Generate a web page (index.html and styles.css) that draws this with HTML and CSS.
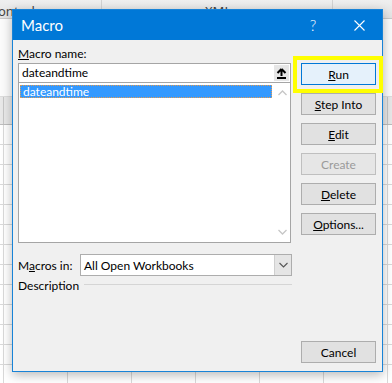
FILE: index.html
```html
<!DOCTYPE html>
<html>
<head>
    <meta charset="UTF-8">
    <title>Macro</title>
    <link rel="stylesheet" href="styles.css">
</head>
<body>
    <div class="ribbon">
        <span class="grp grp-ctl">ontrols</span>
        <span class="grp grp-xml">XML</span>
        <span class="grp grp-rest"></span>
    </div>
    <div class="formula"></div>
    <div class="colhead"></div>
    <div class="grid"></div>

    <div class="dialog">
        <div class="titlebar">
            <span class="title">Macro</span>
            <span class="tb-btn help">?</span>
            <span class="tb-btn close">
                <svg width="11" height="11" viewBox="0 0 11 11"><path d="M0.5 0.5 L10.5 10.5 M10.5 0.5 L0.5 10.5" stroke="#fff" stroke-width="1.1" fill="none"/></svg>
            </span>
        </div>

        <div class="content">
            <div class="main">
                <div class="lbl"><u>M</u>acro name:</div>
                <div class="namebox">
                    <span class="name-text">dateandtime</span>
                    <span class="up-btn">
                        <svg width="11" height="11" viewBox="0 0 11 11"><path d="M5.5 1 L1.5 5 M5.5 1 L9.5 5 M5.5 1 L5.5 8" stroke="#000" stroke-width="2" fill="none"/><rect x="1" y="9" width="9" height="2" fill="#000"/></svg>
                    </span>
                </div>
                <div class="listbox">
                    <div class="items">
                        <div class="item selected">dateandtime</div>
                    </div>
                    <div class="scroll">
                        <svg width="9" height="6" viewBox="0 0 9 6"><path d="M0.5 5 L4.5 1 L8.5 5" stroke="#c6c6c6" stroke-width="1.3" fill="none"/></svg>
                        <svg width="9" height="6" viewBox="0 0 9 6"><path d="M0.5 1 L4.5 5 L8.5 1" stroke="#c6c6c6" stroke-width="1.3" fill="none"/></svg>
                    </div>
                </div>
                <div class="row-in">
                    <span class="lbl-in">M<u>a</u>cros in:</span>
                    <div class="select">
                        <span class="select-text">All Open Workbooks</span>
                        <span class="select-arrow">
                            <svg width="9" height="6" viewBox="0 0 9 6"><path d="M0.5 1 L4.5 5 L8.5 1" stroke="#555" stroke-width="1.1" fill="none"/></svg>
                        </span>
                    </div>
                </div>
                <div class="desc">
                    <span>Description</span>
                    <span class="rule"></span>
                </div>
            </div>

            <div class="actions">
                <button class="btn btn-default"><u>R</u>un</button>
                <button class="btn"><u>S</u>tep Into</button>
                <button class="btn"><u>E</u>dit</button>
                <button class="btn btn-disabled">C<u>r</u>eate</button>
                <button class="btn"><u>D</u>elete</button>
                <button class="btn"><u>O</u>ptions...</button>
                <button class="btn btn-cancel">Cancel</button>
            </div>
        </div>
    </div>
</body>
</html>
```

FILE: styles.css
```css
body {
    margin: 0;
    width: 392px;
    height: 383px;
    overflow: hidden;
    position: relative;
    background: #ffffff;
    font-family: Lato, "Noto Sans", Arial, sans-serif;
    font-size: 12px;
    color: #000;
}

/* spreadsheet behind the dialog */
.ribbon {
    display: flex;
    height: 19px;
    background: linear-gradient(#efefef, #e3e3e3);
    border-bottom: 1px solid #c9c9c9;
    color: #444;
    font-family: "Noto Sans", Arial, sans-serif;
    font-size: 13px;
    line-height: 16px;
    box-sizing: border-box;
}

.grp {
    border-right: 1px solid #d2d2d2;
    padding-top: 3px;
}

.grp-ctl {
    width: 101px;
    text-indent: -2px;
}

.grp-xml {
    width: 231px;
    padding-left: 103px;
    box-sizing: border-box;
}

.grp-rest {
    flex: 1;
    border-right: none;
}

.formula {
    height: 77px;
    background: #fbfbfb;
    border-bottom: 1px solid #dcdcdc;
}

.colhead {
    height: 27px;
    background-color: #e8e8e8;
    background-image: linear-gradient(90deg, #c6c6c6 1px, transparent 1px);
    background-size: 64px 100%;
    background-position: 3px 0;
    border-bottom: 1px solid #bdbdbd;
}

.grid {
    height: 258px;
    background-image:
        linear-gradient(90deg, #d9d9d9 1px, transparent 1px),
        linear-gradient(#d9d9d9 1px, transparent 1px);
    background-size: 64px 100%, 100% 20px;
    background-position: 3px 0, 0 19px;
}

/* the dialog window */
.dialog {
    position: absolute;
    left: 12px;
    top: 9px;
    width: 371px;
    height: 363px;
    box-sizing: border-box;
    border: 1px solid #1883d7;
    background: #f0f0f0;
    box-shadow: 0 3px 10px rgba(0, 0, 0, 0.28);
    display: flex;
    flex-direction: column;
}

.titlebar {
    display: flex;
    align-items: center;
    height: 30px;
    background: #0078d7;
    color: #fff;
}

.title {
    flex: 1;
    padding-left: 8px;
    font-size: 15px;
}

.tb-btn {
    width: 46px;
    height: 30px;
    display: flex;
    align-items: center;
    justify-content: center;
}

.help {
    font-size: 15px;
    font-weight: 300;
}

.content {
    flex: 1;
    display: flex;
    gap: 9px;
    padding: 6px 6px 8px 5px;
}

.main {
    width: 274px;
    display: flex;
    flex-direction: column;
}

.lbl {
    height: 16px;
    line-height: 16px;
    margin-bottom: 1px;
}

.namebox {
    width: 273px;
    height: 20px;
    box-sizing: border-box;
    border: 1px solid #a5a5a5;
    background: #fff;
    display: flex;
    align-items: center;
    justify-content: space-between;
    padding-left: 3px;
    padding-right: 1px;
}

.name-text {
    line-height: 16px;
}

.up-btn {
    width: 15px;
    height: 16px;
    background: #e6e6e6;
    display: flex;
    align-items: center;
    justify-content: center;
}

.listbox {
    width: 273px;
    height: 160px;
    box-sizing: border-box;
    border: 1px solid #a5a5a5;
    border-top: none;
    background: #fff;
    display: flex;
}

.items {
    flex: 1;
    padding: 2px 1px 0 1px;
}

.item {
    height: 13px;
    line-height: 11px;
    padding-left: 2px;
    box-sizing: border-box;
}

.selected {
    background: #3399ff;
    color: #fff;
    border: 1px dotted #e49b50;
}

.scroll {
    width: 16px;
    display: flex;
    flex-direction: column;
    justify-content: space-between;
    align-items: center;
    padding: 7px 0 7px 1px;
}

.row-in {
    display: flex;
    align-items: center;
    margin-top: 11px;
}

.lbl-in {
    width: 62px;
}

.select {
    flex: 1;
    height: 22px;
    box-sizing: border-box;
    border: 1px solid #adadad;
    background: #fff;
    display: flex;
    align-items: center;
    justify-content: space-between;
}

.select-text {
    padding-left: 3px;
}

.select-arrow {
    width: 16px;
    height: 20px;
    background: #e5e5e5;
    border-left: 1px solid #cfcfcf;
    display: flex;
    align-items: center;
    justify-content: center;
}

.desc {
    display: flex;
    align-items: center;
    gap: 5px;
    margin-top: 2px;
    line-height: 16px;
}

.rule {
    flex: 1;
    height: 1px;
    background: #d5d5d5;
    margin-top: -3px;
}

.actions {
    width: 75px;
    display: flex;
    flex-direction: column;
    gap: 8px;
    padding-top: 17px;
}

.btn {
    position: relative;
    height: 22px;
    margin: 0;
    padding: 0;
    background: #e1e1e1;
    border: 1px solid #adadad;
    font-family: inherit;
    font-size: 12px;
    color: #000;
}

.btn-default {
    background: #e5f1fb;
    border-color: #0078d7;
}

.btn-default::after {
    content: "";
    position: absolute;
    left: -9px;
    right: -8px;
    top: -8px;
    bottom: -9px;
    border: 4px solid #ffff00;
}

.btn-disabled {
    color: #9a9a9a;
    border-color: #bfbfbf;
    background: #e6e6e6;
}

.btn-disabled u {
    text-decoration: none;
}

.btn-cancel {
    margin-top: auto;
}
```
